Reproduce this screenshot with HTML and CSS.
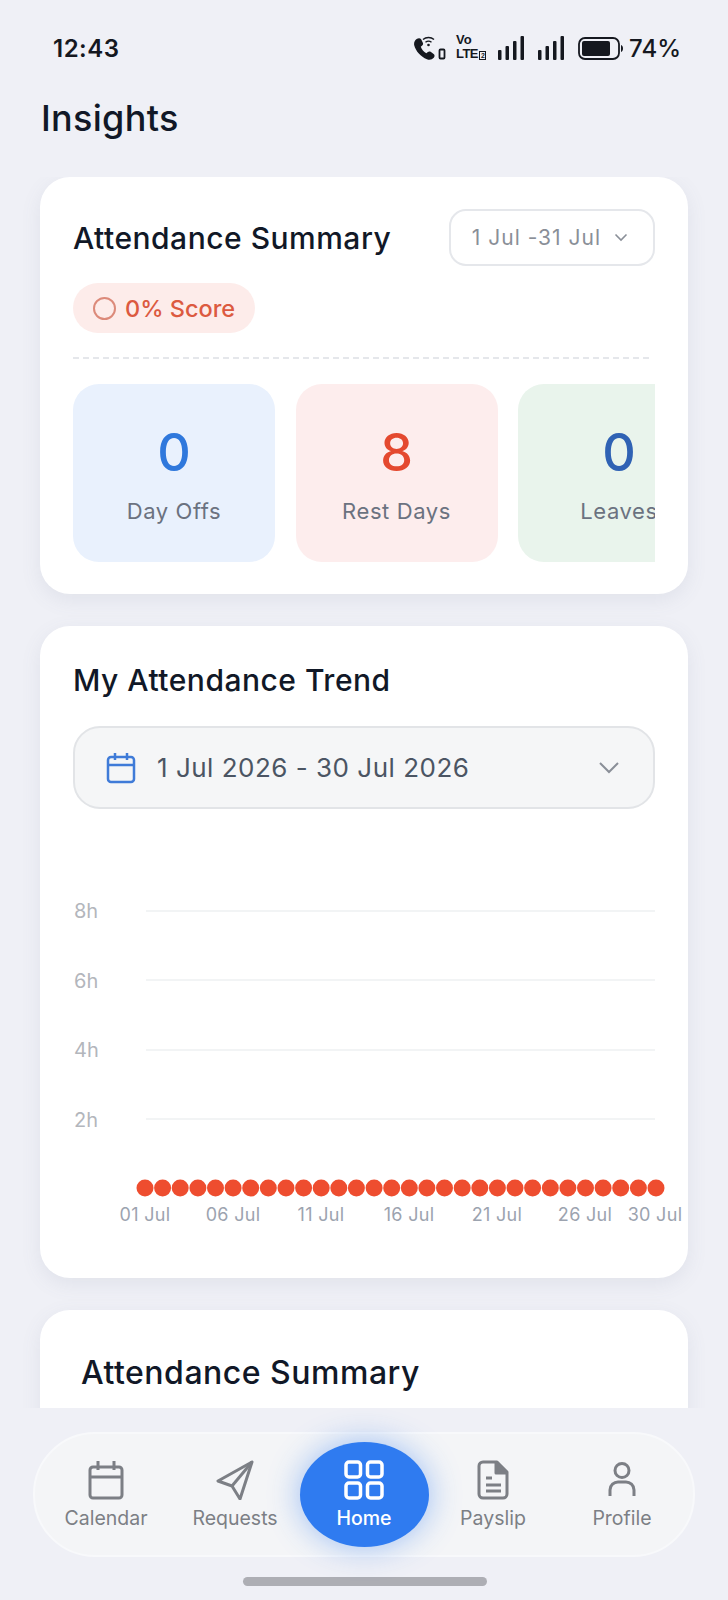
FILE: index.html
```html
<!DOCTYPE html>
<html lang="en">
<head>
    <meta charset="UTF-8">
    <meta name="viewport" content="width=device-width, initial-scale=1.0">
    <title>Insights</title>
    <link rel="stylesheet" href="styles.css">
</head>
<body>
    <div class="status-bar">
        <span class="time">12:43</span>
        <div class="status-icons">
            <svg class="call-icon" width="32" height="24" viewBox="0 0 32 24">
                <path transform="translate(-1 0) scale(1.2)" d="M3 2.500c1.500-1 3-1 3.800.3l1.400 2.800c.4.900.2 1.700-.5 2.300l-1.200 1c.8 2.300 2.400 4.200 4.600 5.400l1.300-1c.7-.5 1.500-.6 2.300-.1l2.500 1.700c1 .8 1 2.200.1 3.200-1.500 1.600-3.500 2.100-5.700 1.200C6.500 17.300 2.300 12.700 1 7.700.6 5.700 1.300 3.700 3 2.500z" fill="#15181f"/>
                <path d="M9 3.500c3-2.600 8-2.600 11 0M11.500 6.300c1.900-1.500 4.100-1.500 6 0" fill="none" stroke="#15181f" stroke-width="1.400"/>
                <circle cx="14.500" cy="9" r="1.300" fill="#15181f"/>
                <rect x="25.500" y="13.500" width="5" height="9" rx="1" fill="none" stroke="#15181f" stroke-width="1.800"/>
            </svg>
            <div class="volte">
                <span class="vo">Vo</span>
                <span class="lte">LTE<i class="sim">2</i></span>
            </div>
            <svg class="signal" width="26" height="24" viewBox="0 0 26 24">
                <rect x="0" y="14" width="3.500" height="10" rx="1"/>
                <rect x="7.500" y="10" width="3.500" height="14" rx="1"/>
                <rect x="15" y="5" width="3.500" height="19" rx="1"/>
                <rect x="22.500" y="0" width="3.500" height="24" rx="1"/>
            </svg>
            <svg class="signal" width="26" height="24" viewBox="0 0 26 24">
                <rect x="0" y="14" width="3.500" height="10" rx="1"/>
                <rect x="7.500" y="10" width="3.500" height="14" rx="1"/>
                <rect x="15" y="5" width="3.500" height="19" rx="1"/>
                <rect x="22.500" y="0" width="3.500" height="24" rx="1"/>
            </svg>
            <svg class="battery" width="45" height="23" viewBox="0 0 45 23">
                <rect x="1" y="1" width="40" height="21" rx="6" fill="none" stroke="#15181f" stroke-width="1.800"/>
                <rect x="4" y="4" width="28" height="15" rx="2" fill="#15181f"/>
                <path d="M43 8c1.300.5 2 1.800 2 3.500s-.7 3-2 3.500z" fill="#15181f"/>
            </svg>
            <span class="percent">74%</span>
        </div>
    </div>

    <h1 class="page-title">Insights</h1>

    <main class="content">
        <section class="card">
            <div class="card-head">
                <h2 class="card-title">Attendance Summary</h2>
                <div class="range-btn">
                    <span>1 Jul -31 Jul</span>
                    <svg width="14" height="9" viewBox="0 0 14 9"><path d="M1.500 1.500 7 7l5.500-5.500" fill="none" stroke="#8a8f98" stroke-width="1.600"/></svg>
                </div>
            </div>
            <div class="score-badge"><span class="score-ring"></span>0% Score</div>
            <div class="divider"></div>
            <div class="tiles">
                <div class="tile tile-blue"><strong>0</strong><span>Day Offs</span></div>
                <div class="tile tile-red"><strong>8</strong><span>Rest Days</span></div>
                <div class="tile tile-green"><strong>0</strong><span>Leaves</span></div>
            </div>
        </section>

        <section class="card">
            <h2 class="card-title card-title-trend">My Attendance Trend</h2>
            <div class="date-select">
                <svg width="30" height="32" viewBox="0 0 30 32" fill="none" stroke="#3f7bd8" stroke-width="2.500">
                    <rect x="2" y="5" width="26" height="25" rx="3"/>
                    <path d="M2 13h26M9 1v7M21 1v7"/>
                </svg>
                <span class="date-text">1 Jul 2026 - 30 Jul 2026</span>
                <svg width="22" height="13" viewBox="0 0 22 13"><path d="M2 2l9 9 9-9" fill="none" stroke="#8a8f98" stroke-width="2"/></svg>
            </div>
            <svg class="chart" width="583" height="439" viewBox="0 0 583 439">
                <g class="grid">
                    <line x1="73" x2="582" y1="104" y2="104"/>
                    <line x1="73" x2="582" y1="173" y2="173"/>
                    <line x1="73" x2="582" y1="243" y2="243"/>
                    <line x1="73" x2="582" y1="312" y2="312"/>
                </g>
                <g class="y-labels">
                    <text x="1" y="111">8h</text>
                    <text x="1" y="181">6h</text>
                    <text x="1" y="250">4h</text>
                    <text x="1" y="320">2h</text>
                </g>
                <g class="dots">
                    <circle cx="72" cy="381" r="8.500"/><circle cx="89.600" cy="381" r="8.500"/><circle cx="107.200" cy="381" r="8.500"/><circle cx="124.900" cy="381" r="8.500"/><circle cx="142.500" cy="381" r="8.500"/>
                    <circle cx="160.100" cy="381" r="8.500"/><circle cx="177.700" cy="381" r="8.500"/><circle cx="195.300" cy="381" r="8.500"/><circle cx="213" cy="381" r="8.500"/><circle cx="230.600" cy="381" r="8.500"/>
                    <circle cx="248.200" cy="381" r="8.500"/><circle cx="265.800" cy="381" r="8.500"/><circle cx="283.400" cy="381" r="8.500"/><circle cx="301.100" cy="381" r="8.500"/><circle cx="318.700" cy="381" r="8.500"/>
                    <circle cx="336.300" cy="381" r="8.500"/><circle cx="353.900" cy="381" r="8.500"/><circle cx="371.500" cy="381" r="8.500"/><circle cx="389.200" cy="381" r="8.500"/><circle cx="406.800" cy="381" r="8.500"/>
                    <circle cx="424.400" cy="381" r="8.500"/><circle cx="442" cy="381" r="8.500"/><circle cx="459.600" cy="381" r="8.500"/><circle cx="477.300" cy="381" r="8.500"/><circle cx="494.900" cy="381" r="8.500"/>
                    <circle cx="512.500" cy="381" r="8.500"/><circle cx="530.100" cy="381" r="8.500"/><circle cx="547.700" cy="381" r="8.500"/><circle cx="565.400" cy="381" r="8.500"/><circle cx="583" cy="381" r="8.500"/>
                </g>
                <g class="x-labels">
                    <text x="72" y="414">01 Jul</text>
                    <text x="160" y="414">06 Jul</text>
                    <text x="248" y="414">11 Jul</text>
                    <text x="336" y="414">16 Jul</text>
                    <text x="424" y="414">21 Jul</text>
                    <text x="512" y="414">26 Jul</text>
                    <text x="582" y="414">30 Jul</text>
                </g>
            </svg>
        </section>

        <section class="card card-last">
            <h2 class="card-title card-title-lg">Attendance Summary</h2>
        </section>
    </main>

    <nav class="bottom-nav">
        <div class="nav-item">
            <svg width="36" height="40" viewBox="0 0 36 40" fill="none" stroke="#7c7f85" stroke-width="3">
                <rect x="2" y="7" width="32" height="31" rx="3"/>
                <path d="M2 17h32M10 1v9M26 1v9"/>
            </svg>
            <span>Calendar</span>
        </div>
        <div class="nav-item">
            <svg width="38" height="40" viewBox="0 0 38 40" fill="none" stroke="#7c7f85" stroke-width="3" stroke-linejoin="round">
                <path d="M36 2 2 21l14 5 8 13z"/>
                <path d="M36 2 16 26"/>
            </svg>
            <span>Requests</span>
        </div>
        <div class="nav-item nav-home">
            <svg width="40" height="40" viewBox="0 0 40 40" fill="none" stroke="#fff" stroke-width="3.500">
                <rect x="2" y="2" width="14.500" height="15" rx="3"/>
                <rect x="23.500" y="2" width="14.500" height="15" rx="3"/>
                <rect x="2" y="23" width="14.500" height="15" rx="3"/>
                <rect x="23.500" y="23" width="14.500" height="15" rx="3"/>
            </svg>
            <span>Home</span>
        </div>
        <div class="nav-item">
            <svg width="32" height="40" viewBox="0 0 32 40" fill="none" stroke="#7c7f85" stroke-width="3" stroke-linejoin="round">
                <path d="M6 2h14l10 10v22a4 4 0 0 1-4 4H6a4 4 0 0 1-4-4V6a4 4 0 0 1 4-4z"/>
                <path d="M19 2v11h11" fill="#7c7f85"/>
                <path d="M9 18h6M9 25h15M9 31h15"/>
            </svg>
            <span>Payslip</span>
        </div>
        <div class="nav-item">
            <svg width="30" height="40" viewBox="0 0 30 40" fill="none" stroke="#7c7f85" stroke-width="3">
                <circle cx="15" cy="10.500" r="7"/>
                <path d="M3 36v-6c0-5 4-8 8-8h8c4 0 8 3 8 8v6"/>
            </svg>
            <span>Profile</span>
        </div>
    </nav>

    <div class="home-bar"></div>
</body>
</html>
```

FILE: styles.css
```css
body {
    margin: 0;
    width: 728px;
    height: 1600px;
    overflow: hidden;
    background: #eff0f6;
    font-family: 'Inter', 'Noto Sans', sans-serif;
    color: #111827;
}

.status-bar {
    height: 96px;
    padding: 0 47px 0 53px;
    display: flex;
    align-items: center;
    justify-content: space-between;
    color: #15181f;
}

.time {
    font-size: 24px;
    font-weight: 600;
    letter-spacing: 0.5px;
}

.status-icons {
    display: flex;
    align-items: center;
}

.call-icon { margin-right: 10px; }

.volte {
    display: flex;
    flex-direction: column;
    width: 32px;
    margin-right: 10px;
    font-family: 'Liberation Sans', sans-serif;
    font-weight: 700;
    color: #15181f;
}

.vo {
    font-size: 13px;
    line-height: 14px;
}

.lte {
    font-size: 13px;
    line-height: 14px;
    letter-spacing: -0.6px;
    white-space: nowrap;
}

.sim {
    font-size: 7px;
    font-style: normal;
    border: 1px solid #15181f;
    margin-left: 1px;
    padding: 0 1px;
}

.signal {
    fill: #15181f;
    margin-right: 14px;
}

.battery { margin-right: 6px; }

.percent {
    font-size: 24px;
    font-weight: 500;
}

.page-title {
    margin: 0;
    padding-left: 41px;
    height: 81px;
    font-size: 36px;
    line-height: 44px;
    font-weight: 500;
    letter-spacing: 0.3px;
}

.content {
    height: 1231px;
    overflow: hidden;
    padding: 0 40px;
    display: flex;
    flex-direction: column;
    gap: 32px;
}

.card {
    flex: none;
    background: #fff;
    border-radius: 30px;
    padding: 32px 33px;
    box-shadow: 0 6px 20px rgba(100, 110, 140, 0.1);
}

.card-head {
    display: flex;
    align-items: center;
    justify-content: space-between;
}

.card-title {
    margin: 0;
    font-size: 30px;
    line-height: 40px;
    font-weight: 500;
    letter-spacing: 0.5px;
}

.card-title-trend {
    margin-top: 2px;
}

.card-title-lg {
    padding: 11px 0 0 8px;
    font-size: 32px;
}

.range-btn {
    display: flex;
    align-items: center;
    gap: 13px;
    height: 53px;
    padding: 0 25px 0 21px;
    border: 2px solid #e5e7eb;
    border-radius: 17px;
    font-size: 21px;
    letter-spacing: 1px;
    color: #8a8f98;
}

.score-badge {
    display: inline-flex;
    align-items: center;
    gap: 9px;
    height: 50px;
    margin-top: 17px;
    padding: 0 20px;
    border-radius: 25px;
    background: #fdecea;
    color: #dc5a40;
    font-size: 23.5px;
    font-weight: 500;
}

.score-ring {
    width: 19px;
    height: 19px;
    border: 2px solid #dc8a7a;
    border-radius: 50%;
}

.divider {
    margin: 24px 6px 0 0;
    border-top: 2px dashed #e5e7eb;
}

.tiles {
    display: flex;
    gap: 20.5px;
    margin-top: 25px;
    overflow: hidden;
}

.tile {
    flex: none;
    width: 202px;
    height: 178px;
    border-radius: 26px;
    display: flex;
    flex-direction: column;
    align-items: center;
    padding-top: 39px;
    box-sizing: border-box;
}

.tile strong {
    font-size: 52px;
    line-height: 60px;
    font-weight: 500;
}

.tile span {
    margin-top: 15px;
    font-size: 22px;
    letter-spacing: 0.6px;
    color: #6b7280;
}

.tile-blue { background: #e9f1fd; }
.tile-blue strong { color: #2f78dc; }
.tile-red { background: #fdeded; }
.tile-red strong { color: #e4492f; }
.tile-green { background: #e9f4ec; }
.tile-green strong { color: #2f62b4; }

.date-select {
    display: flex;
    align-items: center;
    height: 83px;
    margin-top: 26px;
    padding: 0 33px 0 31px;
    box-sizing: border-box;
    background: #f5f6f7;
    border: 2px solid #e2e4e7;
    border-radius: 27px;
}

.date-text {
    flex: 1;
    margin-left: 21px;
    font-size: 26px;
    letter-spacing: 0.5px;
    color: #4b5563;
}

.chart {
    display: block;
    margin-top: -2px;
    overflow: visible;
}

.grid line {
    stroke: #eef0f2;
    stroke-width: 1.500;
}

.y-labels text {
    font-size: 20px;
    fill: #b3b6bc;
}

.dots circle {
    fill: #ee4d2f;
}

.x-labels text {
    font-size: 18px;
    letter-spacing: 0.3px;
    fill: #9ca3af;
    text-anchor: middle;
}

.card-last {
    height: 200px;
}

.bottom-nav {
    display: grid;
    grid-template-columns: repeat(5, 129px);
    justify-content: center;
    align-items: center;
    width: 662px;
    height: 125px;
    margin: 24px 0 0 33px;
    box-sizing: border-box;
    background: #f4f5f7;
    border: 2px solid #f8f9fb;
    border-radius: 62px;
}

.nav-item {
    display: flex;
    flex-direction: column;
    align-items: center;
    gap: 6px;
    font-size: 19.5px;
    color: #7c7f85;
}

.nav-home {
    height: 105px;
    justify-content: center;
    background: #2f7bf0;
    border-radius: 50%;
    color: #fff;
    font-weight: 500;
    box-shadow: 0 0 32px rgba(47, 123, 240, 0.45);
}

.home-bar {
    width: 244px;
    height: 9px;
    margin: 20px 0 0 243px;
    border-radius: 5px;
    background: #adaeb4;
}
```
